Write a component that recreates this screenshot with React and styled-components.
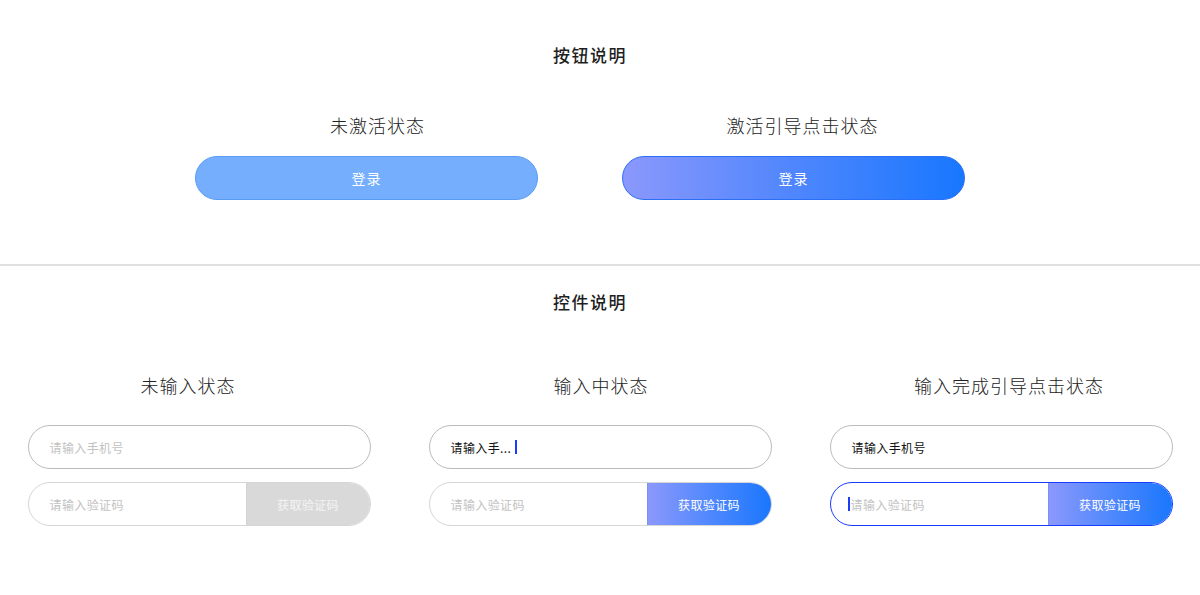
import styled, { createGlobalStyle } from "styled-components";

const GlobalStyle = createGlobalStyle`
  body {
    margin: 0;
    background: #ffffff;
    font-family: "Noto Sans CJK SC", "Noto Sans", sans-serif;
  }
`;

const Page = styled.div`
  width: 1200px;
  height: 595px;
  overflow: hidden;
  background: #ffffff;
`;

const Section = styled.section`
  display: flex;
  flex-direction: column;
  align-items: center;
  padding-top: ${(props) => props.$top}px;
`;

const Title = styled.h2`
  margin: 0 ${(props) => props.$shift || 0}px 0 0;
  font-size: 17px;
  line-height: 24px;
  font-weight: 500;
  letter-spacing: 1.5px;
  color: #1f1f1f;
`;

const Columns = styled.div`
  display: flex;
  gap: ${(props) => props.$gap}px;
  margin-top: ${(props) => props.$top}px;
  margin-right: ${(props) => props.$shift || 0}px;
`;

const Column = styled.div`
  width: 343px;
  display: flex;
  flex-direction: column;
  align-items: center;
`;

const Label = styled.div`
  font-size: 18px;
  line-height: 24px;
  font-weight: 300;
  letter-spacing: 1px;
  color: #222;
  margin-left: ${(props) => props.$shift || 0}px;
  margin-bottom: ${(props) => props.$gap}px;
`;

const LoginButton = styled.button`
  width: 343px;
  height: 44px;
  border-radius: 22px;
  border: 1px solid ${(props) => (props.$active ? "#2a6ff6" : "#5a9cf5")};
  background: ${(props) =>
    props.$active
      ? "linear-gradient(90deg, #8b98fc 0%, #4f86fd 50%, #1877fe 100%)"
      : "#74aefd"};
  color: #ffffff;
  font-family: inherit;
  font-size: 14px;
  letter-spacing: 1px;
  padding: 0;
`;

const Divider = styled.hr`
  margin: 64px 0 0;
  border: 0;
  height: 2px;
  background: #e0e0e0;
`;

const Field = styled.div`
  width: 343px;
  height: 44px;
  box-sizing: border-box;
  border-radius: 22px;
  border: 1px solid ${(props) => props.$border};
  display: flex;
  align-items: center;
  overflow: hidden;
  margin-bottom: 13px;
`;

const FieldText = styled.div`
  flex: 1;
  display: flex;
  align-items: center;
  padding-left: ${(props) => props.$pad || 21}px;
  font-size: 12px;
  letter-spacing: 0.4px;
  color: ${(props) => (props.$filled ? "#111" : "#c2c2c2")};
`;

const Caret = styled.span`
  display: inline-block;
  width: 2px;
  height: 14px;
  background: #1a3cff;
  margin: ${(props) => props.$margin};
`;

const CodeButton = styled.div`
  width: 123px;
  align-self: stretch;
  display: flex;
  align-items: center;
  justify-content: center;
  font-size: 12px;
  letter-spacing: 0.4px;
  color: ${(props) => (props.$active ? "#ffffff" : "#f4f4f4")};
  background: ${(props) =>
    props.$active
      ? "linear-gradient(90deg, #8b98fc 0%, #5088fd 50%, #1a77fe 100%)"
      : "#d9d9d9"};
  border-left: 1px solid ${(props) => (props.$active ? "#7f8ff5" : "#d2d2d2")};
`;

export default function App() {
  return (
    <Page>
      <GlobalStyle />
      <Section $top={43}>
        <Title $shift={20}>按钮说明</Title>
        <Columns $gap={84} $top={46} $shift={40}>
          <Column>
            <Label $gap={19} $shift={22}>未激活状态</Label>
            <LoginButton>登录</LoginButton>
          </Column>
          <Column>
            <Label $gap={19} $shift={18}>激活引导点击状态</Label>
            <LoginButton $active>登录</LoginButton>
          </Column>
        </Columns>
      </Section>
      <Divider />
      <Section $top={24}>
        <Title $shift={20}>控件说明</Title>
        <Columns $gap={58} $top={59}>
          <Column>
            <Label $gap={28} $shift={-22}>未输入状态</Label>
            <Field $border="#bcbcbc">
              <FieldText>请输入手机号</FieldText>
            </Field>
            <Field $border="#d6d6d6">
              <FieldText>请输入验证码</FieldText>
              <CodeButton>获取验证码</CodeButton>
            </Field>
          </Column>
          <Column>
            <Label $gap={28} $shift={2}>输入中状态</Label>
            <Field $border="#bcbcbc">
              <FieldText $filled>
                请输入手...
                <Caret $margin="0 0 0 4px" />
              </FieldText>
            </Field>
            <Field $border="#d6d6d6">
              <FieldText>请输入验证码</FieldText>
              <CodeButton $active>获取验证码</CodeButton>
            </Field>
          </Column>
          <Column>
            <Label $gap={28} $shift={16}>输入完成引导点击状态</Label>
            <Field $border="#bcbcbc">
              <FieldText $filled>请输入手机号</FieldText>
            </Field>
            <Field $border="#1a3cff">
              <FieldText $pad={17}>
                <Caret $margin="0 1px 0 0" />
                请输入验证码
              </FieldText>
              <CodeButton $active>获取验证码</CodeButton>
            </Field>
          </Column>
        </Columns>
      </Section>
    </Page>
  );
}
